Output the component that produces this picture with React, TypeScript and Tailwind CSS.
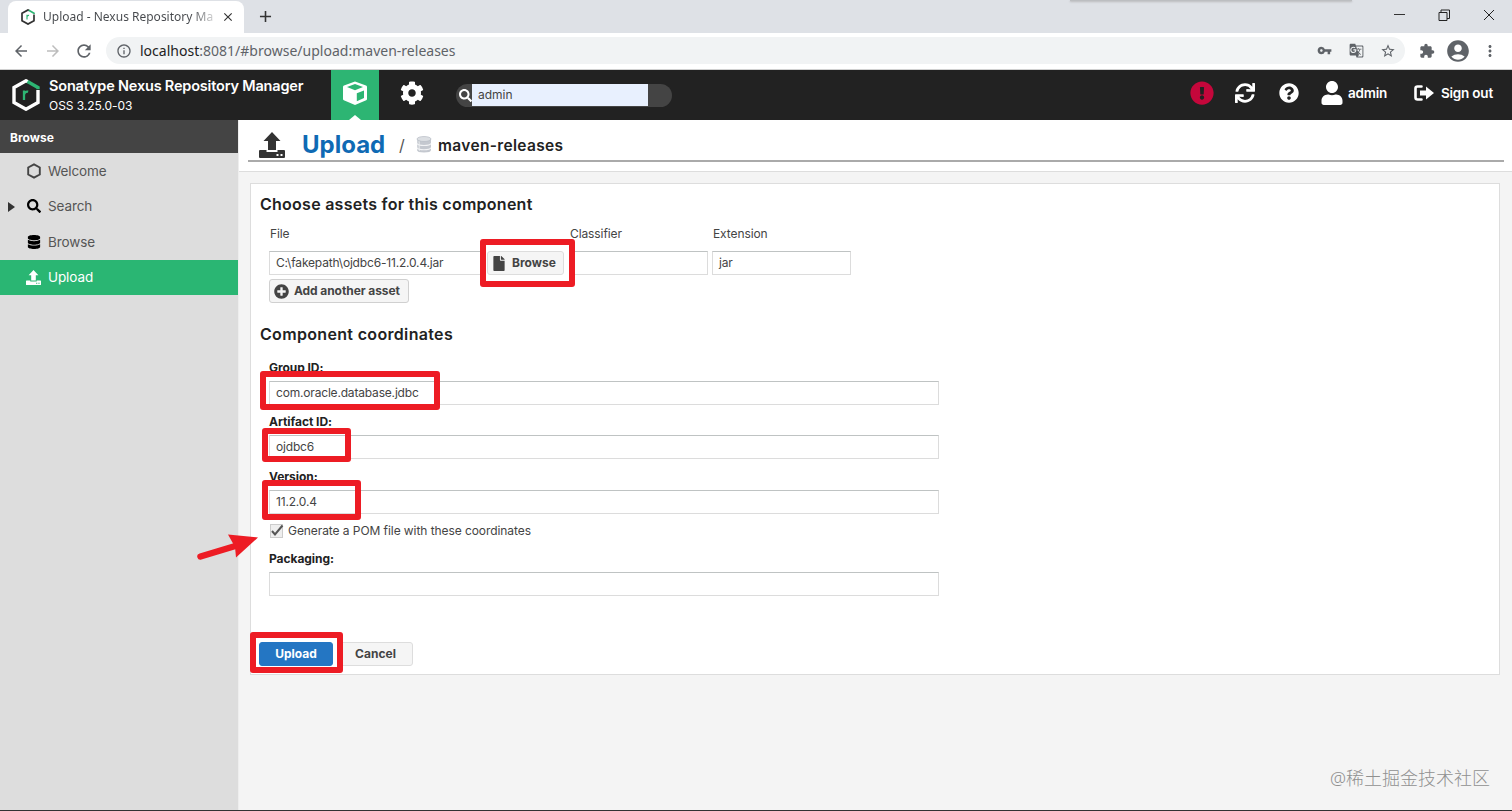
import type { ReactNode } from "react";
import {
  FaCog,
  FaDatabase,
  FaExclamationCircle,
  FaFile,
  FaPlusCircle,
  FaQuestionCircle,
  FaSearch,
  FaSync,
  FaUser,
} from "react-icons/fa";
import {
  MdAccountCircle,
  MdArrowBack,
  MdArrowForward,
  MdClose,
  MdAdd,
  MdExtension,
  MdInfoOutline,
  MdMoreVert,
  MdRefresh,
  MdStarBorder,
  MdVpnKey,
  MdGTranslate,
} from "react-icons/md";

function NexusLogo({ className, base }: { className: string; base: string }) {
  return (
    <svg viewBox="0 0 28 32" className={className} fill="none">
      <path d="M16 2.8 14 1.8 2 8.6v14.8l12 6.8 12-6.8V11" stroke={base} strokeWidth="3.4" />
      <path d="M15.5 2.6 26 8.6v1.6" stroke="#2db573" strokeWidth="3.4" />
      <path d="M12 21v-9.5M12 15.5c.6-2.2 2-3.2 4.2-2.8" stroke="#2db573" strokeWidth="2.3" />
    </svg>
  );
}

function CubeIcon() {
  return (
    <svg viewBox="0 0 24 24" className="h-6 w-6">
      <path d="M12 0.5 23 4.6Q24 5 24 6v12q0 .9-.8 1.3L12 24 .8 19.300Q0 18.900 0 18V6q0-1 1-1.400Z" fill="#fff" />
      <path d="M12 3 20 6 12 9.300 4 6Z" fill="#2db573" />
      <path d="M13.800 12.300 21 9.500v7.600l-7.200 3.200Z" fill="#2db573" />
    </svg>
  );
}

function SignOutIcon() {
  return (
    <svg viewBox="0 0 20 17" className="h-[17px] w-5">
      <path d="M7.500 1.500H3.500q-2 0-2 2v9q0 2 2 2h4" fill="none" stroke="#fff" strokeWidth="2.600" strokeLinecap="round" />
      <path d="M6 5.500h6V1.500L20 8l-8 6.500v-4H6Z" fill="#fff" />
    </svg>
  );
}

function UploadIcon({ className }: { className: string }) {
  return (
    <svg viewBox="0 0 26 26" className={className} fill="currentColor">
      <path d="M13 0 21.500 9H17v9H9V9H4.500Z" />
      <path fillRule="evenodd" d="M1 18h6.500v2h11v-2H25q1 0 1 1v6q0 1-1 1H1q-1 0-1-1v-6q0-1 1-1ZM17.500 22v2h2v-2ZM21.500 22v2h2v-2Z" />
    </svg>
  );
}

function DatabaseIcon() {
  return (
    <svg viewBox="0 0 16 17" className="h-[17px] w-4">
      <path d="M1 3v11q0 2.500 7 2.500t7-2.500V3Z" fill="#c4c8cf" />
      <path d="M2 4v10M3.500 5v10" stroke="#dde0e4" />
      <ellipse cx="8" cy="3" rx="7" ry="2.500" fill="#dcdfe3" stroke="#b8bdc5" strokeWidth=".7" />
      <path d="M1 7.500q1 2 7 2t7-2M1 11.700q1 2 7 2t7-2" fill="none" stroke="#f2f3f5" strokeWidth="1.100" />
    </svg>
  );
}

function Field({ label, value, className }: { label: string; value: string; className: string }) {
  return (
    <div className={className}>
      <div className="h-[21px] text-[12px] leading-4 font-bold tracking-[-0.05px] text-[#222]">{label}</div>
      <TextBox value={value} className="w-[670px]" />
    </div>
  );
}

function TextBox({ value, className }: { value: string; className: string }) {
  return (
    <div
      className={`flex h-6 shrink-0 items-center border border-[#dcdcdc] border-t-[#bfc3c3] bg-white px-1.5 text-[12px] tracking-[-0.18px] text-[#444] ${className}`}
    >
      {value}
    </div>
  );
}

function Button({ children, className }: { children: ReactNode; className: string }) {
  return (
    <div
      className={`flex h-6 shrink-0 items-center rounded-[3px] border text-[12px] font-bold ${className}`}
    >
      {children}
    </div>
  );
}

function NavItem({ icon, label, active, arrow }: { icon: ReactNode; label: string; active?: boolean; arrow?: boolean }) {
  return (
    <div
      className={`flex h-[35.5px] items-center text-[13.500px] tracking-[-0.1px] ${active ? "bg-[#2ab673] text-white" : "text-[#555]"}`}
    >
      <div className="flex w-[26px] pl-2">
        {arrow && (
          <svg viewBox="0 0 7 10" className="mt-0.5 h-2.5 w-[7px]">
            <path d="M0 0 7 5 0 10Z" fill="#333" />
          </svg>
        )}
      </div>
      <div className="flex w-[22px] shrink-0">{icon}</div>
      {label}
    </div>
  );
}

function BrowserChrome() {
  return (
    <div className="font-['Noto_Sans',sans-serif]">
      <div className="relative flex h-[33px] bg-[#dee1e6]">
        <div className="mt-px ml-2 flex w-[236px] items-center rounded-t-lg bg-white pl-3">
          <NexusLogo className="h-4 w-4 shrink-0" base="#333" />
          <span className="ml-[7px] w-[174px] shrink-0 bg-linear-to-r from-[#45484c] from-85% to-[#eee] bg-clip-text text-[12px] whitespace-nowrap text-transparent">
            Upload - Nexus Repository Ma
          </span>
          <MdClose className="ml-1 h-3.5 w-3.5 shrink-0 text-[#333]" />
        </div>
        <MdAdd className="mt-[7px] ml-3 h-[19px] w-[19px] text-[#333]" />
        <div className="absolute top-0 left-[1070px] h-px w-[282px] bg-[#bcbec1] shadow-[0_1px_2px_#aaa]" />
        <div className="mr-[17px] ml-auto flex items-center gap-[33px] pb-1 text-[#222]">
          <div className="h-px w-[11px] bg-[#333]" />
          <svg viewBox="0 0 12 12" className="h-3 w-3" fill="none" stroke="currentColor">
            <path d="M1 3.500h8v8H1ZM3 3.500V1h8.500v8.500H9" />
          </svg>
          <svg viewBox="0 0 12 12" className="h-3 w-3" stroke="currentColor">
            <path d="M1 1 11 11M11 1 1 11" />
          </svg>
        </div>
      </div>
      <div className="flex h-[37px] items-center border-b border-[#d0d0d0] bg-white pb-px pl-3 text-[#5f6368]">
        <MdArrowBack className="h-[18px] w-[18px]" />
        <MdArrowForward className="ml-3.5 h-[18px] w-[18px] text-[#bdbdbd]" />
        <MdRefresh className="ml-3 h-5 w-5" />
        <div className="ml-3 flex h-[27px] w-[1299px] items-center rounded-full bg-[#f1f3f4] px-2.5">
          <MdInfoOutline className="h-4 w-4" />
          <span className="ml-2 text-[14px] tracking-[0.010px]">
            <span className="text-[#222]">localhost</span>:8081/#browse/upload:maven-releases
          </span>
          <MdVpnKey className="ml-auto h-[15px] w-[15px]" />
          <MdGTranslate className="ml-[17px] h-[15px] w-[15px]" />
          <MdStarBorder className="mr-[-1px] ml-4 h-4 w-4" />
        </div>
        <MdExtension className="ml-3.5 h-4 w-4" />
        <MdAccountCircle className="ml-2.5 h-[26px] w-[26px]" />
        <MdMoreVert className="ml-2.5 h-[18px] w-[18px]" />
      </div>
    </div>
  );
}

function Header() {
  return (
    <div className="flex h-[50px] items-center bg-[#222] text-white">
      <NexusLogo className="ml-3 h-8 w-7 shrink-0" base="#fff" />
      <div className="ml-[9px] w-[282px] shrink-0 whitespace-nowrap">
        <div className="text-[14.500px] leading-[20px] font-semibold tracking-[-0.19px]">Sonatype Nexus Repository Manager</div>
        <div className="pt-px text-[12px] leading-[18px] tracking-[-0.05px]">OSS 3.25.0-03</div>
      </div>
      <div className="relative flex h-[50px] w-12 shrink-0 items-center justify-center bg-[#2db573] pb-1">
        <CubeIcon />
        <div className="absolute bottom-0 left-[18px] border-x-[6px] border-b-[5px] border-x-transparent border-b-white" />
      </div>
      <FaCog className="mb-1 ml-[21px] h-6 w-6" />
      <div className="ml-8 flex h-[23px] w-[216px] items-center rounded-full bg-[#444] pl-[3px]">
        <FaSearch className="h-[13px] w-[13px]" />
        <div className="flex h-[22px] w-[176px] items-center bg-[#e8f0fe] pl-1.5 text-[12px] text-[#444]">admin</div>
      </div>
      <div className="mr-[19px] mb-1 ml-auto flex items-center text-[13.500px] font-semibold">
        <FaExclamationCircle className="h-6 w-6 text-[#c4073b]" />
        <FaSync className="ml-[21px] h-5 w-5" />
        <FaQuestionCircle className="ml-6 h-5 w-5" />
        <FaUser className="ml-[22px] h-6 w-[22px]" />
        <span className="ml-[5px] w-[66px] tracking-[-0.2px]">admin</span>
        <SignOutIcon />
        <span className="ml-[7px] tracking-[-0.2px]">Sign out</span>
      </div>
    </div>
  );
}

// red frames and arrow drawn on top of the form
function Annotations() {
  const frame = "absolute rounded-[3px] border-[6px] border-[#ed1c24]";
  return (
    <>
      <div className={`${frame} top-[239px] left-[480px] h-12 w-[95px]`} />
      <div className={`${frame} top-[371px] left-[260px] h-[39px] w-[180px]`} />
      <div className={`${frame} top-[428px] left-[262px] h-[34px] w-[89px]`} />
      <div className={`${frame} top-[480px] left-[262px] h-10 w-[99px]`} />
      <div className={`${frame} top-[632px] left-[250px] h-[41px] w-[93px]`} />
      <svg viewBox="0 0 62 28" className="absolute top-[533px] left-[197px] h-7 w-[62px]">
        <path d="M3.500 23.500 40 12.500" stroke="#ed1c24" strokeWidth="6.500" strokeLinecap="round" />
        <path d="M31 1.500 61 4.500 39 24.500 38 14Z" fill="#ed1c24" />
      </svg>
    </>
  );
}

export default function App() {
  return (
    <div className="relative flex h-[811px] w-[1512px] flex-col overflow-hidden border-b border-[#333] bg-[#f4f4f4] font-['Inter',sans-serif]">
      <BrowserChrome />
      <Header />
      <div className="flex min-h-0 flex-1">
        <div className="w-[239px] shrink-0 border-r border-[#eee] bg-[#ddd]">
          <div className="flex h-[33px] items-center bg-[#444] pt-0.5 pl-[10px] text-[12px] font-bold text-white">Browse</div>
          <NavItem
            icon={
              <svg viewBox="0 0 16 16" className="h-4 w-4">
                <path d="M8 1.300 13.800 4.500v7L8 14.700 2.200 11.500v-7Z" fill="none" stroke="#444" strokeWidth="1.900" />
              </svg>
            }
            label="Welcome"
          />
          <NavItem arrow icon={<FaSearch className="ml-px h-3.5 w-3.5 text-black" />} label="Search" />
          <NavItem icon={<FaDatabase className="ml-px h-3.5 w-3.5 text-black" />} label="Browse" />
          <NavItem active icon={<UploadIcon className="h-[15px] w-[15px]" />} label="Upload" />
        </div>

        <div className="min-w-0 flex-1">
          <div className="h-[52px] border-b border-[#ddd] bg-white pr-2 pl-[9px]">
            <div className="flex h-[42px] items-center border-b-2 border-[#aaa] pt-[9px] pl-[11px]">
              <UploadIcon className="h-[26px] w-[26px] text-[#333]" />
              <span className="ml-[17px] w-[97px] text-[24px] font-bold text-[#0f6ab4]">Upload</span>
              <span className="w-[17px] text-[16px] text-[#555]">/</span>
              <DatabaseIcon />
              <span className="ml-[6px] pt-0.5 text-[15.500px] font-semibold tracking-[0.33px] text-[#222]">maven-releases</span>
            </div>
          </div>

          <div className="mt-[11px] ml-[11px] h-[492px] w-[1250px] border border-[#ddd] bg-white px-[9px] pt-2">
            <h2 className="text-[16px] leading-6 font-semibold tracking-[0.260px] text-[#222]">Choose assets for this component</h2>
            <div className="mt-[10px] flex pl-[10px] text-[12px] leading-4 tracking-[-0.1px] text-[#444]">
              <span className="w-[300px]">File</span>
              <span className="w-[143px]">Classifier</span>
              <span>Extension</span>
            </div>
            <div className="mt-[9px] -ml-px flex pl-[10px]">
              <TextBox value="C:\fakepath\ojdbc6-11.2.0.4.jar" className="w-[213px]" />
              <Button className="ml-[5px] w-[77px] gap-[7px] border-[#ddd] bg-[#f5f5f5] pl-[5px] text-[#444]">
                <FaFile className="h-[15px] w-3" />
                Browse
              </Button>
              <TextBox value="" className="ml-[5px] w-[139px]" />
              <TextBox value="jar" className="ml-[4px] w-[139px]" />
            </div>
            <Button className="mt-1 ml-[9px] w-[140px] gap-[5px] border-[#d0d0d0] bg-[#f5f5f5] pl-[4px] tracking-[-0.08px] text-[#444]">
              <FaPlusCircle className="h-[15px] w-[15px]" />
              Add another asset
            </Button>

            <h2 className="mt-[19px] text-[16px] leading-6 font-semibold tracking-[0.330px] text-[#222]">Component coordinates</h2>
            <div className="pl-[9px]">
              <Field label="Group ID:" value="com.oracle.database.jdbc" className="mt-[14px]" />
              <Field label="Artifact ID:" value="ojdbc6" className="mt-[9px]" />
              <Field label="Version:" value="11.2.0.4" className="mt-[10px]" />
              <div className="mt-[9px] flex h-4 items-center text-[12px] tracking-[-0.07px] text-[#444]">
                <svg viewBox="0 0 14 14" className="mr-[4px] ml-px h-3.5 w-3.5" fill="none">
                  <rect x=".5" y=".5" width="12" height="13" fill="#eee" stroke="#ccc" />
                  <path d="M2 7 5 10.500 12.500 1.500" stroke="#555" strokeWidth="2" />
                </svg>
                Generate a POM file with these coordinates
              </div>
              <Field label="Packaging:" value="" className="mt-[12px]" />
            </div>
            <div className="mt-[46px] -ml-px flex">
              <Button className="w-[74px] justify-center border-[#2476c3] bg-[#2476c3] text-white">Upload</Button>
              <Button className="ml-[5px] w-[75px] justify-center border-[#ddd] bg-[#f5f5f5] text-[#444]">Cancel</Button>
            </div>
          </div>
        </div>
      </div>
      <Annotations />
      <div className="absolute right-[22px] bottom-[18px] font-['Noto_Sans','Noto_Sans_CJK_SC',sans-serif] text-[18px] leading-7 font-light text-[#909090]">
        @稀土掘金技术社区
      </div>
    </div>
  );
}
